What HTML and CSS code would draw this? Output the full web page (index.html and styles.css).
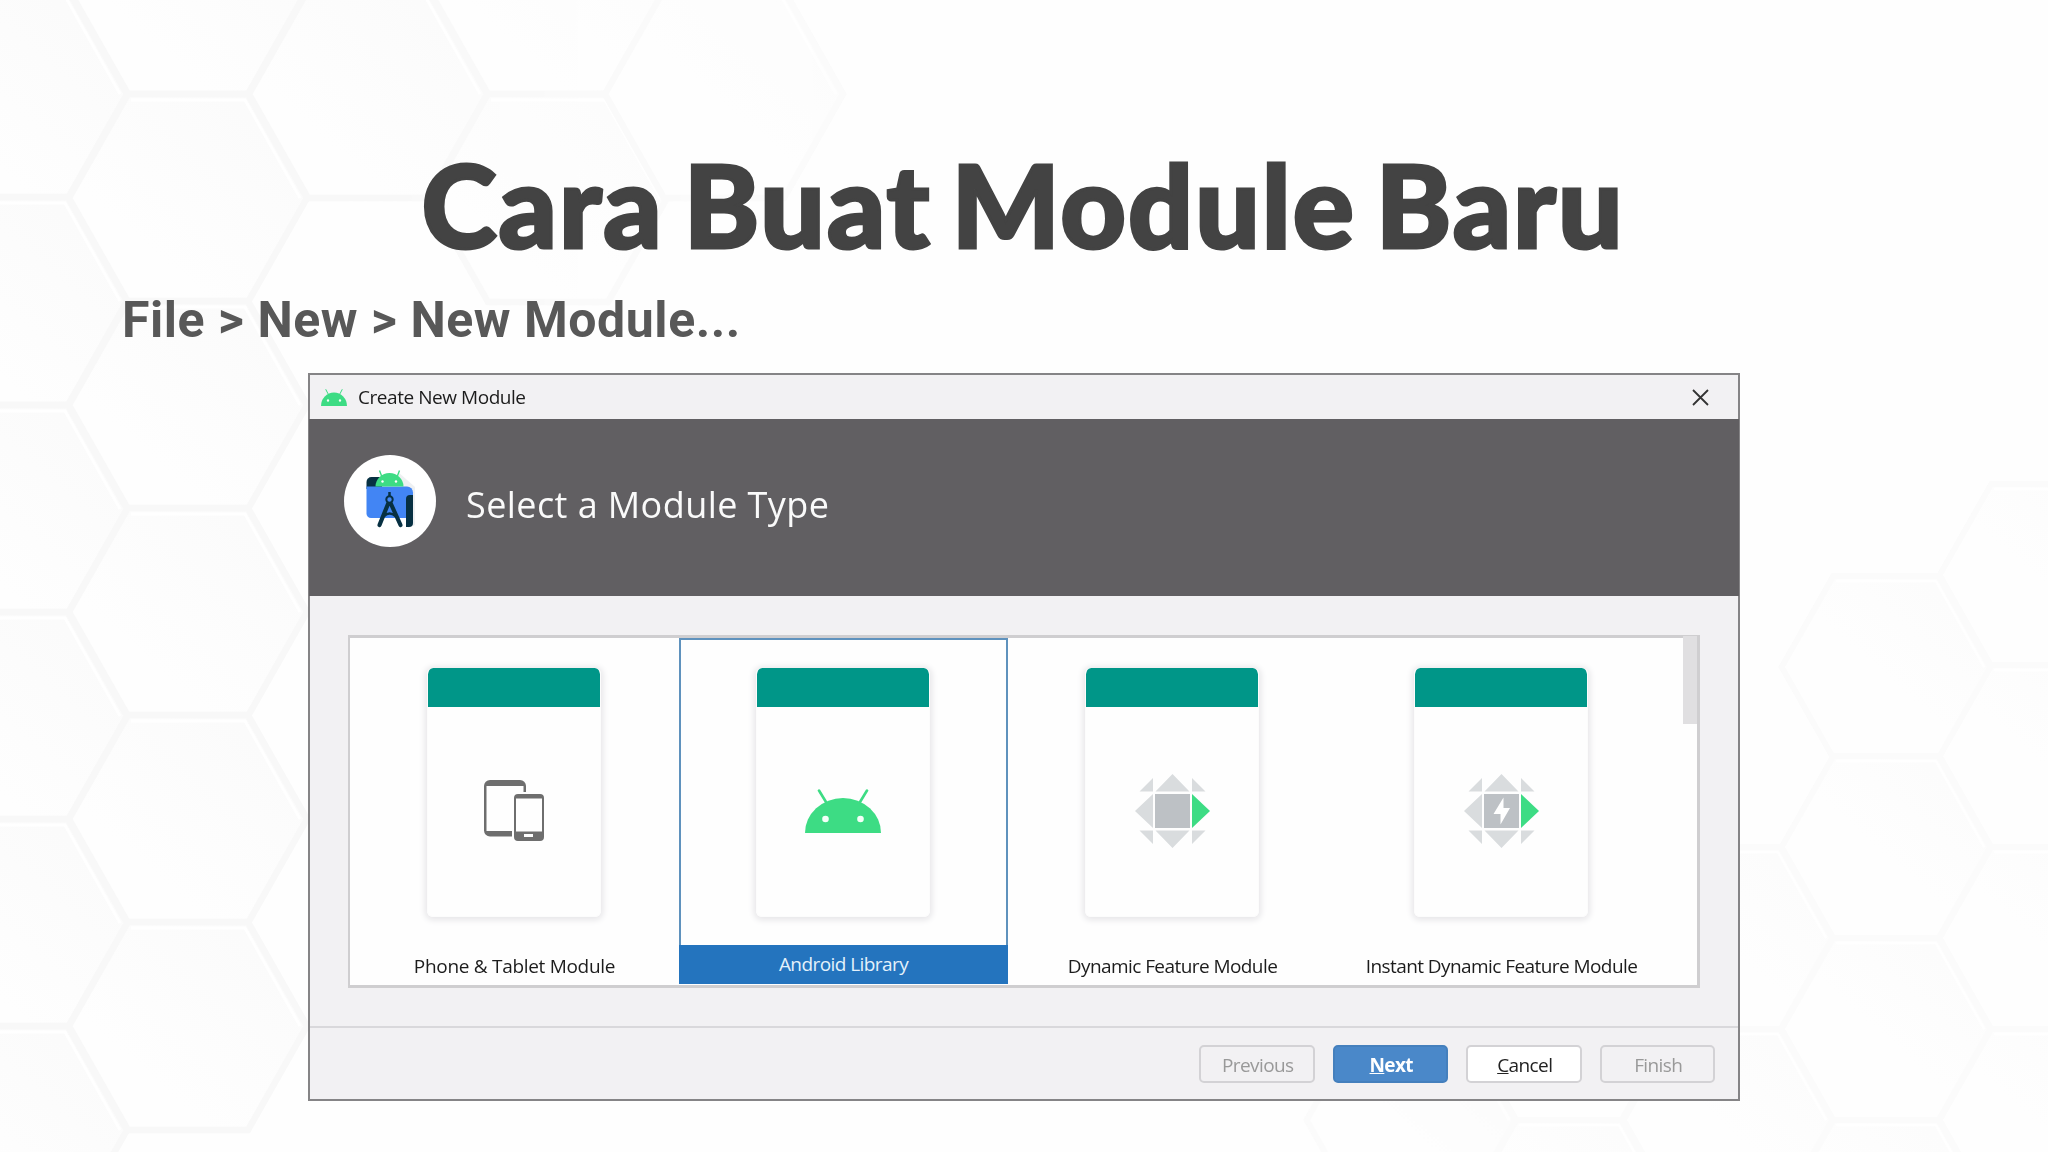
FILE: index.html
```html
<!DOCTYPE html>
<html lang="id">
<head>
  <meta charset="UTF-8">
  <meta name="viewport" content="width=device-width, initial-scale=1.0">
  <title>Cara Buat Module Baru</title>
  <link rel="stylesheet" href="styles.css">
</head>
<body>
  <!-- Honeycomb backdrop -->
  <svg class="backdrop" viewBox="0 0 2048 1152" aria-hidden="true">
    <defs>
      <linearGradient id="hexFill" x1="0" y1="1" x2="1" y2="0">
        <stop offset="0.3" stop-color="#fefefe" />
        <stop offset="1" stop-color="#fafafa" />
      </linearGradient>
      <linearGradient id="hexFade" x1="0" y1="0" x2="1" y2="0">
        <stop offset="0" stop-color="#fff" />
        <stop offset="0.4" stop-color="#fff" />
        <stop offset="1" stop-color="#fff" stop-opacity="0.45" />
      </linearGradient>
      <mask id="fadeRight" maskUnits="userSpaceOnUse" x="0" y="0" width="860" height="1152">
        <rect width="860" height="1152" fill="url(#hexFade)" />
      </mask>
      <g id="hex">
        <path d="M-60-104H60L119 0 60 104H-60L-119 0Z" fill="url(#hexFill)" stroke="#f8f8f8" stroke-width="6.500" />
        <path d="M-57-98H57L112 0" fill="none" stroke="#ffffff" stroke-width="3" />
      </g>
    </defs>
    <g mask="url(#fadeRight)">
      <use href="#hex" x="8" y="-113" /><use href="#hex" x="8" y="94" /><use href="#hex" x="8" y="301" />
      <use href="#hex" x="8" y="509" /><use href="#hex" x="8" y="716" /><use href="#hex" x="8" y="923" />
      <use href="#hex" x="8" y="1130" />
      <use href="#hex" x="188" y="-10" /><use href="#hex" x="188" y="198" /><use href="#hex" x="188" y="405" />
      <use href="#hex" x="188" y="612" /><use href="#hex" x="188" y="819" /><use href="#hex" x="188" y="1026" />
      <use href="#hex" x="368" y="94" /><use href="#hex" x="548" y="-10" /><use href="#hex" x="548" y="198" />
      <use href="#hex" x="724" y="94" />
    </g>
    <g class="backdrop-right">
      <use href="#hex" transform="translate(2044 575) scale(0.877)" />
      <use href="#hex" transform="translate(2044 756) scale(0.877)" />
      <use href="#hex" transform="translate(2044 938) scale(0.877)" />
      <use href="#hex" transform="translate(2044 1120) scale(0.877)" />
      <use href="#hex" transform="translate(1886 667) scale(0.877)" />
      <use href="#hex" transform="translate(1886 847) scale(0.877)" />
      <use href="#hex" transform="translate(1886 1029) scale(0.877)" />
      <use href="#hex" transform="translate(1886 1211) scale(0.877)" />
      <use href="#hex" transform="translate(1728 938) scale(0.877)" />
      <use href="#hex" transform="translate(1728 1120) scale(0.877)" />
      <use href="#hex" transform="translate(1569 1029) scale(0.877)" />
      <use href="#hex" transform="translate(1569 1211) scale(0.877)" />
      <use href="#hex" transform="translate(1411 1120) scale(0.877)" />
    </g>
  </svg>

  <main class="slide">
    <h1>Cara Buat Module Baru</h1>
    <p class="menu-path">File &gt; New &gt; New Module...</p>

    <section class="window">
      <header class="titlebar">
        <svg class="titlebar-icon" viewBox="0 0 76 44" preserveAspectRatio="none"><use href="#androidHead" /></svg>
        <span class="titlebar-text">Create New Module</span>
        <svg class="close" viewBox="0 0 17 17"><path d="M1 1 16 16M16 1 1 16" /></svg>
      </header>

      <div class="banner">
        <svg class="studio-logo" viewBox="0 0 92 92">
          <circle cx="46" cy="46" r="46" fill="#fff" />
          <path d="M54 17 71 32V70L64 73 60 40Z" fill="#eef0f2" />
          <path d="M22.500 34V27a5 5 0 0 1 5-5H38V34Z" fill="#073042" />
          <path d="M22.500 31.500H63a6 6 0 0 1 6 6V63H27a4.500 4.500 0 0 1-4.500-4.500Z" fill="#4285f4" />
          <path d="M31.500 31.500a14 13.500 0 0 1 28 0Z" fill="#3ddc84" />
          <path d="M38 22 35.500 15.500M53 22 55.500 15.500" stroke="#3ddc84" stroke-width="1.400" />
          <circle cx="38.500" cy="26.500" r="1.200" fill="#fff" /><circle cx="52" cy="26.500" r="1.200" fill="#fff" />
          <path d="M45.500 37V42" stroke="#073042" stroke-width="2.500" />
          <circle cx="45.500" cy="44.500" r="3.200" fill="none" stroke="#073042" stroke-width="2" />
          <path d="M44 49 35.500 70M47 49 56.500 70" fill="none" stroke="#073042" stroke-width="4.200" stroke-linecap="round" />
          <path d="M40 61Q45.500 56 51.500 61" fill="none" stroke="#073042" stroke-width="2.600" />
          <path d="M62 44a4 4 0 0 1 4-4h3V68a4 4 0 0 1-4 4H62Z" fill="#073042" />
        </svg>
        <h2>Select a Module Type</h2>
      </div>

      <div class="content">
        <div class="module-list">
          <div class="module">
            <div class="card">
              <svg class="device-icon" viewBox="0 0 60 61">
                <path d="M6 0H36a6 6 0 0 1 6 6V12H39.500V6H2.500V51H28V56.500H6a6 6 0 0 1-6-6V6a6 6 0 0 1 6-6Z" fill="#6e6e6e" />
                <path fill-rule="evenodd" d="M34 14H56a4 4 0 0 1 4 4V57a4 4 0 0 1-4 4H34a4 4 0 0 1-4-4V18a4 4 0 0 1 4-4ZM32 18.500V51.500H58V18.500ZM40 54V57H49V54Z" fill="#6e6e6e" />
              </svg>
            </div>
            <span class="module-name name-phone">Phone &amp; Tablet Module</span>
          </div>
          <div class="module selected">
            <div class="card">
              <svg class="android-icon" viewBox="0 0 76 44">
                <g id="androidHead">
                  <path d="M0 44a38 35 0 0 1 76 0Z" fill="#3ddc84" />
                  <path d="M21 13 14 1.500M55 13 62 1.500" stroke="#3ddc84" stroke-width="2.600" stroke-linecap="round" />
                  <circle cx="20.500" cy="30" r="3.300" fill="#f4fff8" /><circle cx="55.500" cy="30" r="3.300" fill="#f4fff8" />
                </g>
              </svg>
            </div>
            <span class="module-name">Android Library</span>
          </div>
          <div class="module">
            <div class="card">
              <svg class="feature-icon" viewBox="0 0 75 74">
                <g id="featureShape">
                  <path d="M37.500 0 54.500 17.500H20.500ZM37.500 74 54.500 56.500H20.500ZM0 37 18 20V54ZM18 4V17.500H4.500ZM57 4V17.500H70.500ZM18 70V56.500H4.500ZM57 70V56.500H70.500Z" fill="#d9dcde" />
                  <path d="M20 20H55V54H20Z" fill="#bdc1c5" />
                  <path d="M57 20 75 37 57 54Z" fill="#3ddc84" />
                </g>
              </svg>
            </div>
            <span class="module-name">Dynamic Feature Module</span>
          </div>
          <div class="module">
            <div class="card">
              <svg class="feature-icon" viewBox="0 0 75 74">
                <use href="#featureShape" />
                <path d="M39.500 23.500 29.500 40H36.500V50.500L46 34H39.500Z" fill="#fff" />
              </svg>
            </div>
            <span class="module-name">Instant Dynamic Feature Module</span>
          </div>
          <div class="scroll-thumb"></div>
        </div>
      </div>

      <footer class="actions">
        <button class="btn" disabled>Previous</button>
        <button class="btn primary"><u>N</u>ext</button>
        <button class="btn normal"><u>C</u>ancel</button>
        <button class="btn" disabled>Finish</button>
      </footer>
    </section>
  </main>
</body>
</html>
```
FILE: styles.css
```css
* {
  box-sizing: border-box;
}

body {
  margin: 0;
  width: 2048px;
  height: 1152px;
  overflow: hidden;
  background-color: #fefefe;
  font-family: "Open Sans", "Noto Sans", sans-serif;
  color: #1c1c1c;
}

.backdrop {
  position: absolute;
  inset: 0;
  width: 2048px;
  height: 1152px;
}

.backdrop-right {
  opacity: 0.6;
}

.slide {
  position: relative;
  padding-top: 135px;
}

h1 {
  margin: 0;
  padding-right: 2px;
  text-align: center;
  font: 900 114px/138px "Lato Black", Lato, sans-serif;
  letter-spacing: 2px;
  word-spacing: -9px;
  color: #434343;
  -webkit-text-stroke: 3px #434343; /* thickens the bold cut up to black */
}

.menu-path {
  margin: 18px 0 0 122px;
  font: 700 50px/58px Roboto, sans-serif;
  letter-spacing: 0.55px;
  color: #585858;
}

/* Dialog */
.window {
  width: 1432px;
  height: 728px;
  margin: 24px 0 0 308px;
  display: flex;
  flex-direction: column;
  border: 2px solid #858486;
  background-color: #f2f1f3;
}

.titlebar {
  height: 44px;
  display: flex;
  align-items: center;
  padding: 0 29px 0 11px;
}

.titlebar-icon {
  width: 26px;
  height: 17px;
}

.titlebar-text {
  margin-left: 11px;
  font-size: 19px;
  letter-spacing: -0.45px;
}

.close {
  width: 17px;
  height: 17px;
  margin-left: auto;
  fill: none;
  stroke: #333;
  stroke-width: 1.8;
}

.banner {
  height: 177px;
  margin: 0 -1px;
  display: flex;
  align-items: center;
  padding: 0 0 14px 35px;
  background-color: #615f62;
}

.studio-logo {
  width: 92px;
  height: 92px;
}

h2 {
  margin: 7px 0 0 30px;
  font-size: 36px;
  font-weight: 400;
  letter-spacing: 0.42px;
  color: #fafafa;
}

.content {
  height: 430px;
  padding: 39px 38px 0 38px;
}

/* Module gallery */
.module-list {
  position: relative;
  width: 1352px;
  height: 353px;
  display: flex;
  border: 3px solid #cfced0;
  border-left-width: 2px;
  background-color: #fefefe;
}

.module {
  width: 329px;
  height: 346px;
  display: flex;
  flex-direction: column;
  align-items: center;
  padding-top: 30px;
}

.card {
  width: 174px;
  height: 251px;
  margin-right: 1px;
  display: flex;
  align-items: center;
  justify-content: center;
  border: 1px solid #fcfcfc;
  border-top: 0;
  border-radius: 6px;
  background: linear-gradient(#009688 39px, #fefefe 39px) padding-box;
  box-shadow: 0 1px 6px 2px #e6e5e8;
}

.module-name {
  width: 100%;
  height: 39px;
  margin-top: 28px;
  text-align: center;
  font-size: 19px;
  line-height: 43px;
  letter-spacing: -0.57px;
  white-space: nowrap;
}

.name-phone {
  letter-spacing: -0.3px;
}

.selected {
  padding-top: 28px;
  border: 2px solid #5f92bd;
  border-bottom: 0;
}

.selected .module-name {
  width: 329px;
  background-color: #2474be;
  color: #e3f1fb;
  line-height: 39px;
}

.device-icon {
  width: 60px;
  height: 61px;
  margin-top: 37px;
}

.android-icon {
  width: 76px;
  height: 44px;
  margin-top: 37px;
}

.feature-icon {
  width: 75px;
  height: 74px;
  margin-top: 37px;
}

.scroll-thumb {
  position: absolute;
  top: -2px;
  right: 0;
  width: 14px;
  height: 88px;
  background-color: #e0dfe1;
}

/* Wizard buttons */
.actions {
  flex: 1;
  display: flex;
  justify-content: flex-end;
  gap: 18px;
  padding: 17px 23px 0 0;
  border-top: 2px solid #d9d8db;
}

.btn {
  width: 115.5px;
  height: 38px;
  padding: 1px 0 0 2px;
  border: 2px solid #d3d2d5;
  border-radius: 5px;
  background-color: #f2f1f3;
  font-family: inherit;
  font-size: 19px;
  letter-spacing: -0.6px;
  color: #999;
}

.btn.primary {
  border-color: #4580bd;
  background-color: #4a88c9;
  font-weight: 700;
  color: #fff;
}

.btn.normal {
  background-color: #fff;
  color: #222;
}
```
